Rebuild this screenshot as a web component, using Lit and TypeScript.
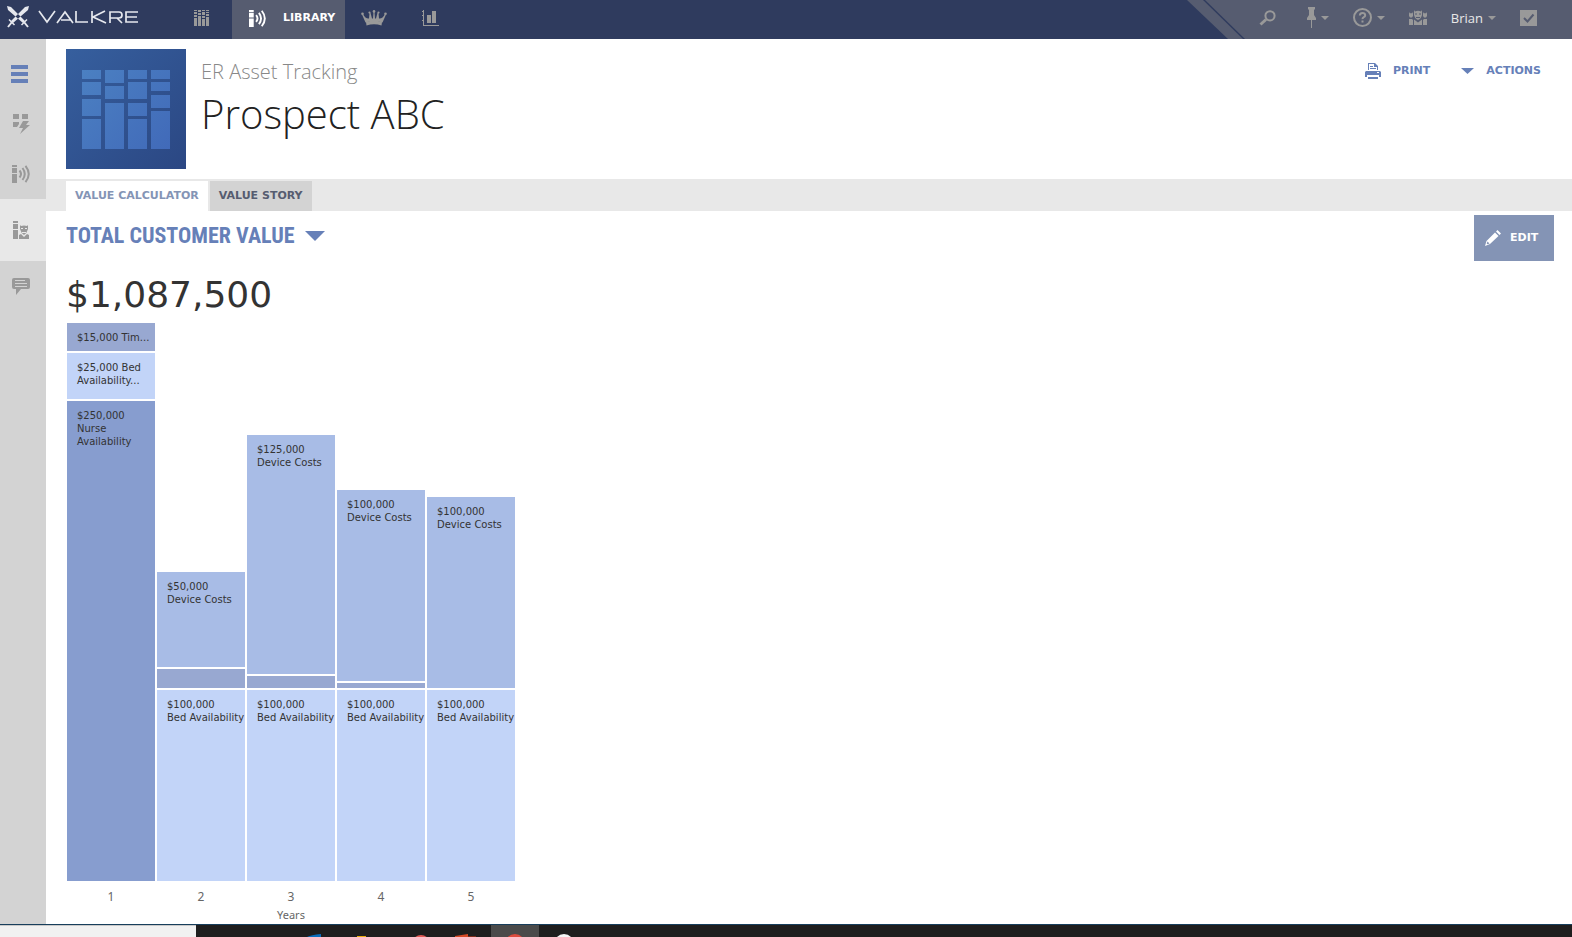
import { LitElement, html, css, svg } from "lit";
import { customElement } from "lit/decorators.js";

interface Segment {
  amount?: string;
  name?: string;
  size: number;
  tone: "time" | "bed" | "nurse" | "device";
  layout?: "one-line" | "inline";
}

const YEARS: Segment[][] = [
  [
    { amount: "$15,000", name: "Tim...", size: 28, tone: "time", layout: "one-line" },
    { amount: "$25,000", name: "Bed Availability...", size: 46, tone: "bed", layout: "inline" },
    { amount: "$250,000", name: "Nurse Availability", size: 480, tone: "nurse" },
  ],
  [
    { amount: "$50,000", name: "Device Costs", size: 95, tone: "device" },
    { size: 19, tone: "time" },
    { amount: "$100,000", name: "Bed Availability", size: 191, tone: "bed" },
  ],
  [
    { amount: "$125,000", name: "Device Costs", size: 239, tone: "device" },
    { size: 12, tone: "time" },
    { amount: "$100,000", name: "Bed Availability", size: 191, tone: "bed" },
  ],
  [
    { amount: "$100,000", name: "Device Costs", size: 191, tone: "device" },
    { size: 5, tone: "time" },
    { amount: "$100,000", name: "Bed Availability", size: 191, tone: "bed" },
  ],
  [
    { amount: "$100,000", name: "Device Costs", size: 191, tone: "device" },
    { amount: "$100,000", name: "Bed Availability", size: 191, tone: "bed" },
  ],
];

const caret = (w: number, h: number) =>
  html`<svg width=${w} height=${h} viewBox="0 0 10 5" preserveAspectRatio="none" fill="currentColor" aria-hidden="true"><path d="M0 0h10L5 5z" /></svg>`;

const signal = (size: number) => html`<svg width=${size} height=${size} viewBox="0 0 18 18" aria-hidden="true">
  <path fill="currentColor" d="M0 0h5v2H0zM0 3h5v5H0zM0 9h5v9H0z" />
  <path fill="none" stroke="currentColor" stroke-width="2" d="M7.500 5.500q3 3.500 0 7M10.500 3q4.500 6 0 12M13.500 0.800q6.500 8.200 0 16.400" />
</svg>`;

const blocks = html`<svg width="16" height="16" viewBox="0 0 16 16" fill="currentColor" aria-hidden="true">
  <path d="M0 0h3v1H0zM0 2h3v2H0zM0 5h3v2H0zM0 8h3v8H0zM4 0h3v2H4zM4 3h3v2H4zM4 6h3v10H4zM8 0h3v1H8zM8 2h3v3H8zM8 6h3v2H8zM8 9h3v7H8zM12 0h3v1h-3zM12 2h3v1h-3zM12 4h3v2h-3zM12 7h3v9h-3z" />
</svg>`;

const tileBars: [number, number, number][] = [
  [16, 21, 9], [16, 33, 13], [16, 50, 17], [16, 70, 30],
  [39, 21, 13], [39, 37, 13], [39, 54, 46],
  [62, 21, 9], [62, 33, 17], [62, 54, 13], [62, 70, 30],
  [85, 21, 9], [85, 33, 9], [85, 46, 13], [85, 62, 38],
];

@customElement("app-root")
export class AppRoot extends LitElement {
  static styles = css`
    :host {
      display: flex;
      flex-direction: column;
      min-height: 100vh;
      background: #fff;
      color: #333;
      font-family: Verdana, "DejaVu Sans", sans-serif;
    }
    * { box-sizing: border-box; }
    svg { display: block; flex: none; }
    button {
      border: 0;
      padding: 0;
      margin: 0;
      background: none;
      color: inherit;
      font: inherit;
      cursor: pointer;
    }
    a { color: inherit; text-decoration: none; }
    h1, h2, p { margin: 0; font-weight: normal; }

    .topbar {
      display: flex;
      height: 39px;
      background: #2f3b5e;
      color: #999;
    }
    .brand {
      display: flex;
      align-items: center;
      width: 172px;
      padding: 0 0 6px 7px;
    }
    .nav { display: flex; flex: 1; }
    .nav-item {
      display: flex;
      align-items: center;
      justify-content: center;
      width: 58px;
      padding-bottom: 3px;
    }
    .nav-item:first-child { width: 60px; }
    .nav-item:last-child { width: 54px; }
    .nav-item.current {
      justify-content: flex-start;
      width: 113px;
      gap: 17px;
      padding-left: 17px;
      background: #565c70;
      color: #fff;
      font: bold 11px/16px "DejaVu Sans", sans-serif;
    }
    .tools {
      display: flex;
      align-items: center;
      justify-content: flex-end;
      gap: 24px;
      width: 385px;
      padding: 0 35px 4px 72px;
      background: #565c70;
      clip-path: polygon(0 0, 100% 0, 100% 100%, 41px 100%);
      position: relative;
    }
    .stripe { position: absolute; left: 0; top: 0; }
    .tool { display: flex; align-items: center; gap: 5px; }
    .search-tool { padding-right: 7px; }
    .user { color: #e8e8e8; font: 13px/16px "Open Sans", "Noto Sans", sans-serif; }
    .user svg { color: #999; }

    .body { display: flex; flex: 1; }
    .side {
      display: flex;
      flex-direction: column;
      width: 46px;
      background: #d3d3d3;
      color: #999;
    }
    .side-item {
      display: flex;
      align-items: center;
      justify-content: center;
      height: 50px;
      padding-right: 4px;
    }
    .side-item:first-child { margin-top: 10px; color: #6680b8; padding-right: 7px; }
    .side-item.current { height: 62px; background: #e8e8e8; }

    main { flex: 1; min-width: 0; display: flex; flex-direction: column; }
    .head {
      display: flex;
      align-items: flex-start;
      gap: 15px;
      padding: 10px 31px 10px 20px;
    }
    .titles { flex: 1; padding-top: 10px; }
    .parent { font: 300 20px/26px "Open Sans", sans-serif; color: #888; }
    .title { font: 300 40px/58px "Open Sans", sans-serif; color: #222; }
    .actions { display: flex; gap: 31px; padding-top: 13px; color: #6680b8; }
    .action { display: flex; align-items: center; gap: 12px; font: bold 11px/18px "DejaVu Sans", sans-serif; }

    .tabs {
      display: flex;
      gap: 2px;
      padding: 2px 20px 0;
      background: #e8e8e8;
      font: bold 11px/14px "DejaVu Sans", sans-serif;
    }
    .tab { height: 30px; padding: 0 9px; background: #d3d3d3; color: #565c70; }
    .tab.current { background: #fff; color: #8494b5; }

    .panel { padding: 4px 18px 0 20px; }
    .panel-head { display: flex; justify-content: space-between; align-items: flex-start; }
    .measure { display: flex; align-items: center; gap: 10px; height: 42px; color: #6680b8; }
    .measure h2 { font: bold 22px/26px "Roboto Condensed", Roboto, sans-serif; }
    .edit {
      display: flex;
      align-items: center;
      gap: 9px;
      height: 46px;
      width: 80px;
      padding-left: 11px;
      background: #8494b5;
      color: #fff;
      font: bold 11px/14px "DejaVu Sans", sans-serif;
    }
    .total { padding-top: 6px; font: 36px/56px "DejaVu Sans", sans-serif; }

    .chart { width: 448px; margin-left: 1px; display: grid; grid-template-columns: repeat(5, 1fr); column-gap: 2px; }
    .column { display: flex; flex-direction: column; justify-content: flex-end; gap: 2px; min-width: 0; }
    .segment { overflow: hidden; }
    .label { padding: 8px 0 0 10px; font: 10px/13px "DejaVu Sans", sans-serif; }
    .one-line { white-space: nowrap; }
    .time { background: #98a8d1; }
    .bed { background: #c2d4f8; }
    .nurse { background: #879dcf; }
    .device { background: #a8bce6; }
    .year { padding-top: 7px; text-align: center; font: 12px/18px "Noto Sans", sans-serif; color: #666; }
    .axis { grid-column: 1 / -1; text-align: center; font: 11px/18px "Noto Sans", sans-serif; color: #666; }

    .taskbar {
      display: flex;
      height: 13px;
      border-top: 1px solid #173e5c;
      background: #1e1e1e;
      overflow: hidden;
    }
    .search { width: 196px; background: #f1f1f1; border-top: 1px solid #c8c8c8; }
    .apps { margin-left: 99px; }
  `;

  private label(s: Segment) {
    if (!s.amount) return "";
    return s.layout
      ? html`<div class="label ${s.layout}">${`${s.amount} ${s.name}`}</div>`
      : html`<div class="label">${s.amount}<br />${s.name}</div>`;
  }

  private segment(s: Segment) {
    return html`<div class="segment ${s.tone}" style="height:${s.size}px">${this.label(s)}</div>`;
  }

  private tile() {
    return html`<svg width="120" height="120" viewBox="0 0 120 120" aria-hidden="true">
      <defs>
        <linearGradient id="tile" x1="0" y1="0" x2="1" y2="1"><stop offset="0" stop-color="#365f9e" /><stop offset="1" stop-color="#2b4783" /></linearGradient>
        <linearGradient id="bar" gradientUnits="userSpaceOnUse" x1="16" y1="21" x2="104" y2="100"><stop offset="0" stop-color="#4b80c2" /><stop offset="1" stop-color="#416ab9" /></linearGradient>
      </defs>
      <path fill="url(#tile)" d="M0 0h120v120H0z" />
      ${tileBars.map(([x, y, h]) => svg`<rect x=${x} y=${y} width="19" height=${h} fill="url(#bar)" />`)}
    </svg>`;
  }

  render() {
    return html`
      <header class="topbar">
        <a class="brand" href="#" aria-label="Valkre">
          <svg width="132" height="24" viewBox="0 0 132 24">
            <path fill="#e6e8ee" d="M0 1l4 1 14 14-2 2L1 5zM22 1l-4 1L4 16l2 2L21 5z" />
            <path fill="none" stroke="#e6e8ee" stroke-width="1.500" d="M2 14.500L7.500 20M20 14.500L14.500 20" />
            <path fill="none" stroke="#e6e8ee" stroke-width="2" d="M5 17l-4 5M17 17l4 5" />
            <path fill="none" stroke="#e6e8ee" stroke-width="1.700" d="M32 6l8 11 8-11M50 18l8-11 8 11M54 15h10M69 6v11h12M85 6v12M98 6L86 12l13 6M103 18V7h9q3 0 3 3t-3 3h-9M110 13l5 5M131 7h-12v10h12M119 12h11" />
          </svg>
        </a>
        <nav class="nav" aria-label="Main">
          <a class="nav-item" href="#" aria-label="Portfolio">${blocks}</a>
          <a class="nav-item current" href="#">${signal(17)}<span>LIBRARY</span></a>
          <a class="nav-item" href="#" aria-label="Leaders">
            <svg width="26" height="16" viewBox="0 0 26 16" fill="currentColor"><path d="M1 4.500L2 4q2.500 5 6 4.500L8.500 3h1L11 8.500h1L12.500 2h1L14 8.500h1L16.500 3h1L18 8.500q3.500.5 6-4.500l1 .5L21.500 12.500q-8.500-3-17 0z" /><path d="M5 12q8-3 16 0l-.5 3.500q-7.500-2.500-15 0z" /><circle cx="1.500" cy="3.800" r="1.300" /><circle cx="24.500" cy="3.800" r="1.300" /><circle cx="8.500" cy="2.600" r="1.100" /><circle cx="17.500" cy="2.600" r="1.100" /><circle cx="13" cy="1.400" r="1.300" /></svg>
          </a>
          <a class="nav-item" href="#" aria-label="Reports">
            <svg width="17" height="16" viewBox="0 0 17 16" fill="currentColor"><path d="M1 0h1v15h15v1H1zM0 1h1v1H0zM0 5h1v1H0zM0 10h1v1H0zM5 5h4v8H5zM10 1h4v12h-4z" /></svg>
          </a>
        </nav>
        <div class="tools">
          <svg class="stripe" width="60" height="39" viewBox="0 0 60 39" aria-hidden="true"><path stroke="#2f3b5e" stroke-width="1.400" d="M16 -1L58 40" /></svg>
          <button class="tool search-tool" aria-label="Search">
            <svg width="17" height="16" viewBox="0 0 17 16" fill="none" stroke="currentColor"><circle cx="11" cy="5.800" r="4.600" stroke-width="2" /><path stroke-width="3" d="M7 9.500L1.500 14.500" /></svg>
          </button>
          <button class="tool" aria-label="Pinned">
            <svg width="9" height="21" viewBox="0 0 9 21" fill="currentColor"><path d="M1 0h7v2L7 3v5l2 3v2H0v-2l2-3V3L1 2zM4 13h1v8H4z" /></svg>${caret(8, 4)}
          </button>
          <button class="tool" aria-label="Help">
            <svg width="19" height="19" viewBox="0 0 19 19" fill="none" stroke="currentColor"><circle cx="9.500" cy="9.500" r="8.500" stroke-width="2" /><path stroke-width="2" d="M6.800 7.500q.2-2.500 2.700-2.500t2.700 2.200q0 1.300-1.400 2t-1.300 2M9.500 12.500v2" /></svg>${caret(8, 4)}
          </button>
          <button class="tool" aria-label="Team">
            <svg width="18" height="15" viewBox="0 0 18 15" fill="currentColor"><path d="M5 0l1 1.500q3-1.500 6 0L13 0v5q-1 4-4 5-3-1-4-5zM0 2l1 1.500 1-.5 1 .5L4 2v4L3 7.500H1L0 6zM18 2l-1 1.500-1-.5-1 .5L14 2v4l1 1.500h2L18 6zM0 9h3l1 1v5H0zM15 9h3v6h-4v-5zM5 9.500l4 3 4-3V15H5z" /><path fill="#565c70" d="M6 3.500h2v1H6zM10 3.500h2v1h-2zM7 7h4v1H7z" /></svg>
          </button>
          <button class="tool user">Brian ${caret(8, 4)}</button>
          <button class="tool" aria-label="Tasks">
            <svg width="17" height="16" viewBox="0 0 17 16"><path fill="#999" d="M0 0h17v16H0z" /><path fill="none" stroke="#565c70" stroke-width="2" d="M4 8l3.500 3.500L13.500 4.500" /></svg>
          </button>
        </div>
      </header>

      <div class="body">
        <nav class="side" aria-label="Section">
          <button class="side-item" aria-label="Menu"><svg width="17" height="18" viewBox="0 0 17 18" fill="currentColor"><path d="M0 0h17v4H0zM0 7h17v4H0zM0 14h17v4H0z" /></svg></button>
          <a class="side-item" href="#" aria-label="Quick view"><svg width="17" height="20" viewBox="0 0 17 20" fill="currentColor"><path d="M0 0h6v5H0zM9 0h6v5H9zM0 8h6v2l-2 3H0zM10 7h6l-3 4h4L7 20l3-6H6z" /></svg></a>
          <a class="side-item" href="#" aria-label="Library">${signal(18)}</a>
          <a class="side-item current" href="#" aria-label="Prospects"><svg width="17" height="18" viewBox="0 0 17 18" fill="currentColor"><path d="M0 0h5v2H0zM0 3h5v5H0zM0 9h5v9H0zM7 4l1 1q3-1 6 0l1-1v4q-1 4-4 6-3-2-4-6zM6 18v-4l2-1 3 3 3-3 2 1v4z" /><path fill="#e8e8e8" d="M8 7h2v1H8zM12 7h2v1h-2zM9 11h4v1H9z" /></svg></a>
          <a class="side-item" href="#" aria-label="Comments"><svg width="18" height="17" viewBox="0 0 18 17" fill="currentColor"><path d="M2 0h14q2 0 2 2v7q0 2-2 2H9l-5 6v-6H2q-2 0-2-2V2q0-2 2-2z" /><path fill="#d3d3d3" d="M3 2h10v1H3zM3 5h12v1H3zM3 8h12v1H3z" /></svg></a>
        </nav>

        <main>
          <header class="head">
            ${this.tile()}
            <div class="titles">
              <p class="parent">ER Asset Tracking</p>
              <h1 class="title">Prospect ABC</h1>
            </div>
            <div class="actions">
              <button class="action">
                <svg width="16" height="16" viewBox="0 0 16 16" fill="currentColor"><path d="M3 0h7l3 3v4h-1V4H9V1H4v6H3zM5 3h3v1H5zM5 5h6v1H5zM1 8h14l1 1v5h-2v-2H2v2H0V9zM3 14h10v2H3z" /><path fill="#fff" d="M12 9h2v1h-2z" /></svg>PRINT
              </button>
              <button class="action">${caret(13, 6)}ACTIONS</button>
            </div>
          </header>

          <div class="tabs" role="tablist">
            <button class="tab current" role="tab" aria-selected="true">VALUE CALCULATOR</button>
            <button class="tab" role="tab" aria-selected="false">VALUE STORY</button>
          </div>

          <section class="panel">
            <div class="panel-head">
              <button class="measure"><h2>TOTAL CUSTOMER VALUE</h2>${caret(20, 10)}</button>
              <button class="edit">
                <svg width="16" height="16" viewBox="0 0 16 16" fill="currentColor"><path d="M12.500 0L16 3.500 14.500 5 11 1.500zM10 2.500L13.500 6 5 14l-5 2 1.500-5z" /><path fill="#8494b5" d="M2.500 11.500l2 2-2 .8-.8-.8z" /></svg>EDIT
              </button>
            </div>
            <p class="total">$1,087,500</p>
            <div class="chart">
              ${YEARS.map((segments) => html`<div class="column">${segments.map((s) => this.segment(s))}</div>`)}
              ${YEARS.map((_, i) => html`<div class="year">${i + 1}</div>`)}
              <div class="axis">Years</div>
            </div>
          </section>
        </main>
      </div>

      <footer class="taskbar">
        <div class="search"></div>
        <svg class="apps" width="290" height="12" viewBox="0 0 290 12" aria-hidden="true">
          <path fill="#4a4a4a" d="M196 0h48v12h-48z" />
          <path fill="#0a6ebd" d="M12 12q4-2 14-3v3z" />
          <path fill="#e8ac0c" d="M62 11h9v1h-9z" />
          <circle cx="126" cy="19" r="9" fill="#e25a55" /><circle cx="126" cy="19" r="7" fill="#fff" />
          <path fill="#d64a26" d="M160 12v-1l13-2v3z" /><path fill="#7a2c1a" d="M173 11h8v1h-8z" />
          <circle cx="220" cy="19" r="10" fill="#dc4b3e" />
          <circle cx="269" cy="19" r="10" fill="#f4f6f6" />
        </svg>
      </footer>
    `;
  }
}
